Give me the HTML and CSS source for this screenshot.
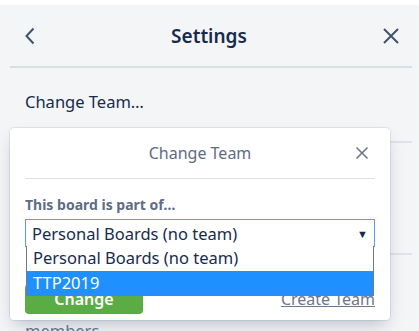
FILE: index.html
```html
<!DOCTYPE html>
<html lang="en">
<head>
    <meta charset="UTF-8">
    <meta name="viewport" content="width=device-width, initial-scale=1.0">
    <title>Settings</title>
    <link rel="stylesheet" href="styles.css">
</head>
<body>
    <div class="top-strip"></div>
    <div class="menu-panel">
        <div class="menu-header">
            <button class="icon-btn back-btn" aria-label="Back">
                <svg width="12" height="18" viewBox="0 0 12 18"><path d="M9.5 1.5 L2.5 9 L9.5 16.5" fill="none" stroke="#42526e" stroke-width="2"/></svg>
            </button>
            <h2 class="menu-title">Settings</h2>
            <button class="icon-btn close-btn" aria-label="Close">
                <svg width="18" height="18" viewBox="0 0 18 18"><path d="M2 2 L16 16 M16 2 L2 16" fill="none" stroke="#42526e" stroke-width="2"/></svg>
            </button>
        </div>

        <ul class="menu-list">
            <li class="menu-item first">Change Team…</li>
            <li class="menu-divider"></li>
            <li class="menu-item tall">Card Covers Enabled</li>
            <li class="menu-divider"></li>
            <li class="menu-item last">members</li>
        </ul>

        <div class="popover">
            <div class="popover-header">
                <span class="popover-title">Change Team</span>
                <button class="icon-btn popover-close" aria-label="Close">
                    <svg width="14" height="14" viewBox="0 0 14 14"><path d="M1.5 1.5 L12.5 12.5 M12.5 1.5 L1.5 12.5" fill="none" stroke="#6b778c" stroke-width="1.6"/></svg>
                </button>
            </div>
            <div class="popover-body">
                <label class="field-label">This board is part of…</label>
                <div class="select-wrap">
                    <div class="select-box">
                        <span>Personal Boards (no team)</span>
                        <span class="select-arrow">▼</span>
                    </div>
                    <ul class="select-options">
                        <li class="option">Personal Boards (no team)</li>
                        <li class="option selected">TTP2019</li>
                    </ul>
                </div>
                <div class="actions">
                    <button class="button-primary">Change</button>
                    <a href="#" class="link">Create Team</a>
                </div>
            </div>
        </div>
    </div>
</body>
</html>
```

FILE: styles.css
```css
body {
    font-family: "Noto Sans", "Open Sans", sans-serif;
    background-color: #f4f5f7;
    color: #172b4d;
    margin: 0;
    height: 331px;
    overflow: hidden;
}
.top-strip {
    height: 5px;
    background-color: #ffffff;
}
.menu-panel {
    position: relative;
    margin: 0 7px 0 10px;
}
.menu-header {
    display: flex;
    align-items: center;
    height: 61px;
    padding: 0 12px 0 14px;
    border-bottom: 2px solid #d9dee5;
}
.icon-btn {
    background: none;
    border: 0;
    padding: 0;
    display: flex;
    cursor: pointer;
}
.menu-title {
    flex: 1;
    margin: 0;
    text-align: center;
    font-size: 19px;
    font-weight: 600;
    color: #172b4d;
}
.menu-list {
    list-style: none;
    margin: 0;
    padding: 0;
}
.menu-item {
    padding: 22px 0 0 15px;
    box-sizing: border-box;
    font-size: 16.5px;
}
.menu-item.first {
    height: 73px;
}
.menu-item.tall {
    height: 110px;
}
.menu-item.last {
    padding-top: 64px;
    height: 76px;
    color: #6b778c;
}
.menu-divider {
    height: 2px;
    background-color: #dfe3e8;
}
.popover {
    position: absolute;
    top: 123px;
    left: 0;
    width: 380px;
    height: 192px;
    background-color: #ffffff;
    border-radius: 4px;
    box-shadow: 0 8px 16px -4px rgba(9, 30, 66, 0.25), 0 0 0 1px rgba(9, 30, 66, 0.08);
    padding: 0 15px;
    box-sizing: border-box;
}
.popover-header {
    position: relative;
    height: 50px;
    display: flex;
    align-items: center;
    justify-content: center;
    border-bottom: 1px solid #dfe1e6;
}
.popover-title {
    font-size: 16px;
    color: #5e6c84;
}
.popover-close {
    position: absolute;
    right: 6px;
    top: 18px;
}
.popover-body {
    padding-top: 16px;
}
.field-label {
    display: block;
    font-size: 14px;
    font-weight: 700;
    color: #5e6c84;
    height: 24px;
}
.select-wrap {
    position: relative;
}
.select-box {
    display: flex;
    justify-content: space-between;
    align-items: center;
    height: 28px;
    padding: 0 6px;
    border: 1px solid #5b9cf0;
    box-sizing: border-box;
    font-size: 16.5px;
}
.select-arrow {
    font-size: 11px;
    color: #172b4d;
}
.select-options {
    position: absolute;
    top: 27px;
    left: 1px;
    right: 1px;
    margin: 0;
    padding: 0;
    list-style: none;
    background-color: #ffffff;
    border: 1px solid #7a7a7a;
    border-top: 0;
    z-index: 2;
}
.option {
    height: 24px;
    line-height: 24px;
    padding-left: 6px;
    font-size: 16.5px;
}
.option.selected {
    background-color: #1e90ff;
    color: #ffffff;
    border-top: 1px solid #ffffff;
}
.actions {
    display: flex;
    justify-content: space-between;
    align-items: flex-end;
    margin-top: 37px;
}
.button-primary {
    width: 118px;
    height: 30px;
    border: 0;
    border-radius: 4px;
    background-color: #5aac44;
    color: #ffffff;
    font-family: inherit;
    font-size: 16px;
    font-weight: 600;
}
.link {
    color: #6b778c;
    font-size: 16px;
    padding-bottom: 4px;
}
```
